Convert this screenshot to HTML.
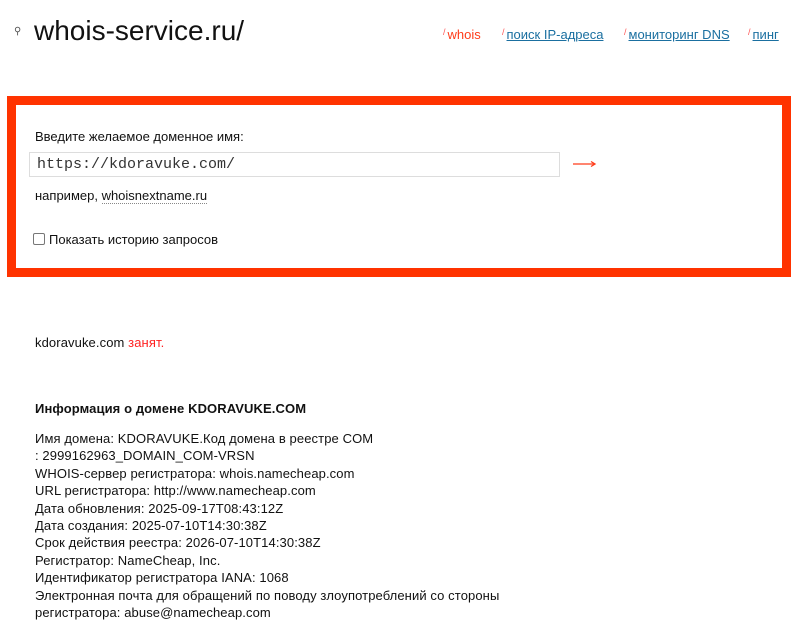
<!DOCTYPE html>
<html><head><meta charset="utf-8"><style>
body{margin:0;width:798px;height:624px;overflow:hidden;background:#fff;font-family:"Liberation Sans","DejaVu Sans",sans-serif;color:#111;position:relative}
.a{position:absolute;white-space:nowrap}
.nav{font-size:13px;top:27px}
.nav a{color:#1a6fa0;text-decoration:underline}
.sl{color:#f55;font-size:9px;vertical-align:top;margin-right:2px}
.box{position:absolute;left:7px;top:96px;width:766px;height:163px;border:9px solid #ff3300}
.info{font-size:13px;line-height:17.4px;letter-spacing:0.1px}
</style></head><body>
<div class="a" style="left:14px;top:26px;font-size:10px;color:#555">&#9906;</div>
<div class="a" style="left:34px;top:15px;font-size:28px;color:#111">whois-service.ru/</div>
<div class="a nav" style="left:443px"><span class="sl">/</span><span style="color:#ff3c1a">whois</span></div>
<div class="a nav" style="left:502px"><span class="sl">/</span><a>поиск IP-адреса</a></div>
<div class="a nav" style="left:624px"><span class="sl">/</span><a>мониторинг DNS</a></div>
<div class="a nav" style="left:748px"><span class="sl">/</span><a>пинг</a></div>
<div class="box"></div>
<div class="a" style="left:35px;top:129px;font-size:13px">Введите желаемое доменное имя:</div>
<div class="a" style="left:29px;top:152px;width:531px;height:25px;border:1px solid #ddd;box-sizing:border-box;font-family:'Liberation Mono',monospace;font-size:15px;line-height:23px;padding-left:7px;color:#333">https://kdoravuke.com/</div>
<svg class="a" style="left:573px;top:158px" width="24" height="12"><path d="M0 6H22M18 3.5L22 6L18 8.5" stroke="#ff3c1a" stroke-width="1.3" fill="none"/></svg>
<div class="a" style="left:35px;top:188px;font-size:13px">например, <span style="border-bottom:1px dotted #888">whoisnextname.ru</span></div>
<div class="a" style="left:33px;top:232px;font-size:13px"><span style="display:inline-block;width:10px;height:10px;border:1px solid #777;border-radius:2px;vertical-align:-1px;margin-right:4px"></span>Показать историю запросов</div>
<div class="a" style="left:35px;top:335px;font-size:13px;letter-spacing:0.1px">kdoravuke.com <span style="color:#f22">занят.</span></div>
<div class="a" style="left:35px;top:401px;font-size:13px;font-weight:bold;letter-spacing:0.1px">Информация о домене KDORAVUKE.COM</div>
<div class="a info" style="left:35px;top:430px">Имя домена: KDORAVUKE.Код домена в реестре COM<br>: 2999162963_DOMAIN_COM-VRSN<br>WHOIS-сервер регистратора: whois.namecheap.com<br>URL регистратора: http://www.namecheap.com<br>Дата обновления: 2025-09-17T08:43:12Z<br>Дата создания: 2025-07-10T14:30:38Z<br>Срок действия реестра: 2026-07-10T14:30:38Z<br>Регистратор: NameCheap, Inc.<br>Идентификатор регистратора IANA: 1068<br>Электронная почта для обращений по поводу злоупотреблений со стороны<br>регистратора: abuse@namecheap.com</div>
</body></html>
